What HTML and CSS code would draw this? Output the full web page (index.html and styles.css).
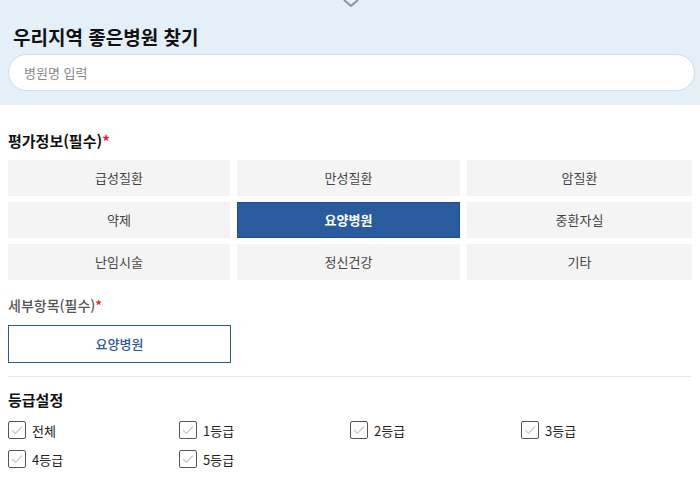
FILE: index.html
```html
<!DOCTYPE html>
<html lang="ko">
<head>
<meta charset="utf-8">
<link rel="stylesheet" href="styles.css">
</head>
<body>
<div class="search">
  <svg class="chev" width="18" height="8" viewBox="0 0 18 8"><path d="M2 0 L9 6 L16 0" fill="none" stroke="#8a949e" stroke-width="2"/></svg>
  <h1 class="search-title">우리지역 좋은병원 찾기</h1>
  <div class="search-input">병원명 입력</div>
</div>
<div class="content">
  <h2 class="sec-title">평가정보(필수)<span class="req">*</span></h2>
  <div class="grid">
    <div class="opt">급성질환</div>
    <div class="opt">만성질환</div>
    <div class="opt">암질환</div>
    <div class="opt">약제</div>
    <div class="opt active">요양병원</div>
    <div class="opt">중환자실</div>
    <div class="opt">난임시술</div>
    <div class="opt">정신건강</div>
    <div class="opt">기타</div>
  </div>
  <h3 class="sub-title">세부항목(필수)<span class="req">*</span></h3>
  <div class="detail-row">
    <div class="detail">요양병원</div>
  </div>
  <hr class="divider">
  <h2 class="sec-title grade-title">등급설정</h2>
  <div class="checks">
    <label class="chk"><span class="box"><svg width="12" height="10" viewBox="0 0 12 10"><path d="M1 5 L4.5 8.5 L11 1.5" fill="none" stroke="#c8c8c8" stroke-width="1.2"/></svg></span>전체</label>
    <label class="chk"><span class="box"><svg width="12" height="10" viewBox="0 0 12 10"><path d="M1 5 L4.5 8.5 L11 1.5" fill="none" stroke="#c8c8c8" stroke-width="1.2"/></svg></span>1등급</label>
    <label class="chk"><span class="box"><svg width="12" height="10" viewBox="0 0 12 10"><path d="M1 5 L4.5 8.5 L11 1.5" fill="none" stroke="#c8c8c8" stroke-width="1.2"/></svg></span>2등급</label>
    <label class="chk"><span class="box"><svg width="12" height="10" viewBox="0 0 12 10"><path d="M1 5 L4.5 8.5 L11 1.5" fill="none" stroke="#c8c8c8" stroke-width="1.2"/></svg></span>3등급</label>
    <label class="chk"><span class="box"><svg width="12" height="10" viewBox="0 0 12 10"><path d="M1 5 L4.5 8.5 L11 1.5" fill="none" stroke="#c8c8c8" stroke-width="1.2"/></svg></span>4등급</label>
    <label class="chk"><span class="box"><svg width="12" height="10" viewBox="0 0 12 10"><path d="M1 5 L4.5 8.5 L11 1.5" fill="none" stroke="#c8c8c8" stroke-width="1.2"/></svg></span>5등급</label>
  </div>
</div>
</body>
</html>
```

FILE: styles.css
```css
* { box-sizing: border-box; }
html, body { margin: 0; padding: 0; background: #fff; }
body {
  font-family: "Noto Sans CJK KR", "Noto Sans", sans-serif;
  color: #222;
  width: 700px;
  overflow: hidden;
}
.search {
  background: #e5eff8;
  height: 105px;
  padding: 0 5px 0 8px;
  position: relative;
}
.chev {
  position: absolute;
  left: 342px;
  top: 0;
}
.search-title {
  margin: 0;
  padding: 24px 0 0 5px;
  height: 54px;
  font-size: 19px;
  font-weight: 700;
  line-height: 26px;
  color: #111;
}
.search-input {
  height: 37px;
  background: #fff;
  border: 1px solid #d3dbe4;
  border-radius: 19px;
  padding-left: 15px;
  font-size: 13px;
  line-height: 35px;
  color: #888;
}
.content {
  padding: 0 9px 0 8px;
}
.sec-title {
  margin: 0;
  padding-top: 25px;
  height: 55px;
  font-size: 15px;
  font-weight: 700;
  line-height: 22px;
  color: #111;
}
.req { color: #d22; }
.grid {
  display: grid;
  grid-template-columns: 222px 223px 225px;
  column-gap: 7px;
  row-gap: 6px;
}
.opt {
  height: 36px;
  background: #f4f4f4;
  font-size: 13px;
  line-height: 36px;
  text-align: center;
  color: #444;
}
.opt.active {
  background: #2a5b9f;
  border: 1px solid #1f4d8a;
  line-height: 34px;
  color: #fff;
  font-weight: 700;
}
.sub-title {
  margin: 0;
  padding-top: 15px;
  height: 45px;
  font-size: 14px;
  font-weight: 500;
  line-height: 20px;
  color: #555;
}
.detail-row { display: flex; }
.detail {
  width: 223px;
  height: 38px;
  border: 1px solid #2d5a95;
  font-size: 13px;
  line-height: 36px;
  text-align: center;
  color: #2d5a95;
  font-weight: 500;
}
.divider {
  margin: 13px 0 0;
  border: 0;
  border-top: 1px solid #e6e6e6;
}
.grade-title {
  padding-top: 12px;
  height: 44px;
}
.checks {
  display: grid;
  grid-template-columns: repeat(4, 171px);
  row-gap: 11px;
}
.chk {
  display: flex;
  align-items: center;
  gap: 6px;
  font-size: 13px;
  color: #222;
  height: 18px;
}
.box {
  width: 18px;
  height: 18px;
  border: 1px solid #555;
  border-radius: 2px;
  display: flex;
  align-items: center;
  justify-content: center;
}
```
